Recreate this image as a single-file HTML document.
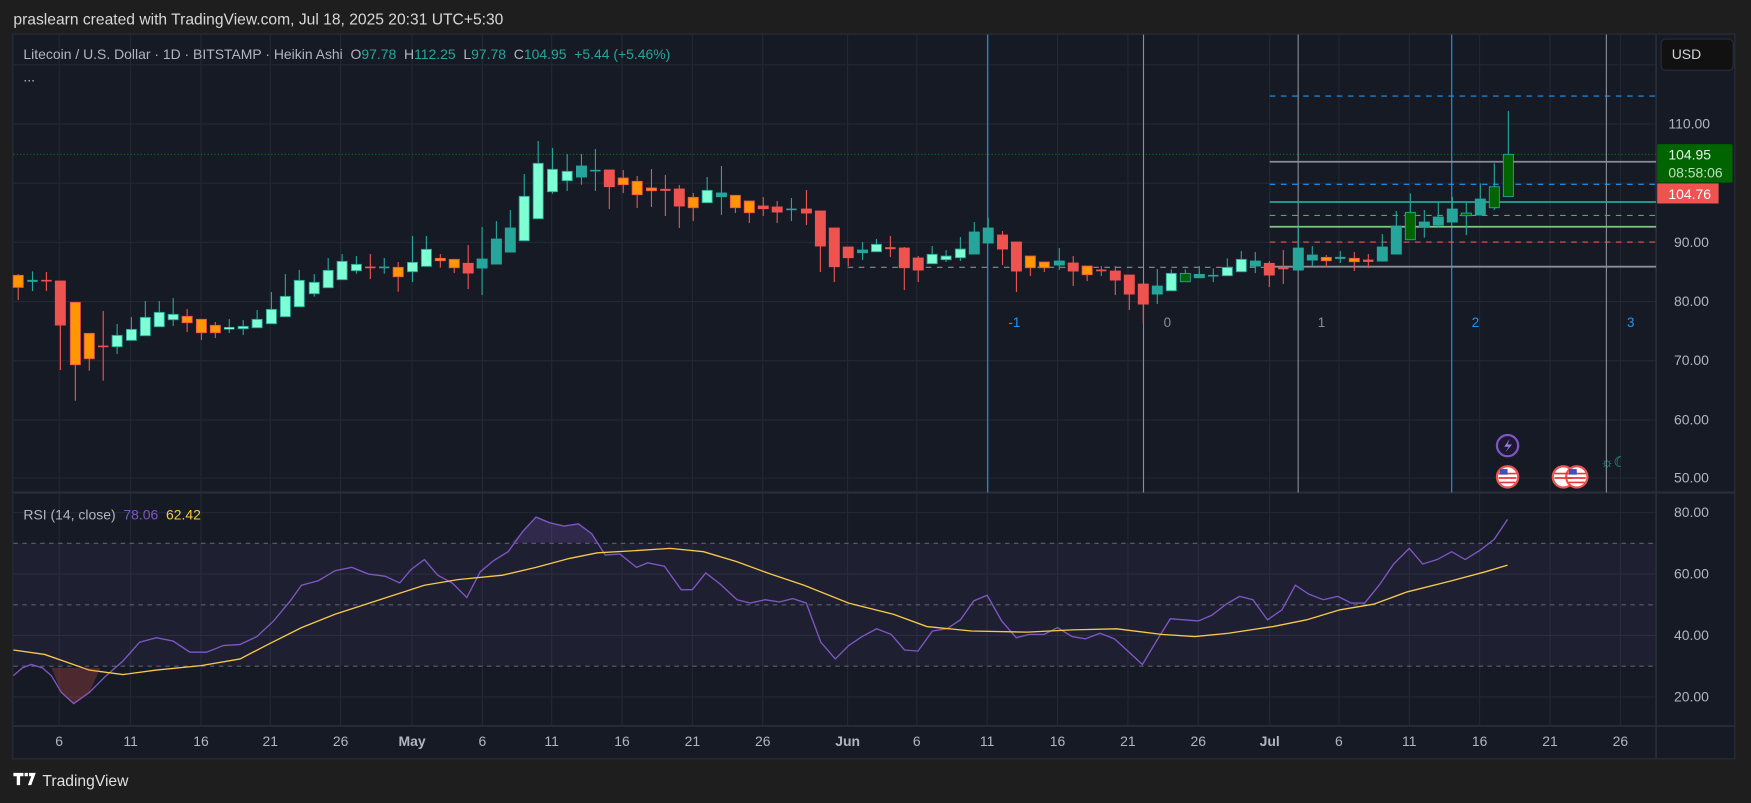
<!DOCTYPE html>
<html><head><meta charset="utf-8">
<style>
html,body{margin:0;padding:0;background:#1e1e1e;width:1751px;height:803px;overflow:hidden}
svg{display:block}
text{font-family:"Liberation Sans",sans-serif;white-space:pre}
</style></head>
<body>
<svg id="s" width="1751" height="803" viewBox="0 0 1568 719" preserveAspectRatio="none" xmlns="http://www.w3.org/2000/svg">
<rect x="0" y="0" width="1568" height="719" fill="#1e1e1e"/>
<text x="12" y="22" font-size="14" fill="#d8d8d8">praslearn created with TradingView.com, Jul 18, 2025 20:31 UTC+5:30</text>
<rect x="11.5" y="30.5" width="1542" height="649" fill="#161a25" stroke="#2a2e39"/>
<g id="grid" stroke="#242833" stroke-width="1"></g>
<rect x="12" y="486.5" width="1471" height="110" fill="#7e57c2" fill-opacity="0.09"/>
<g stroke="#5d606b" stroke-dasharray="4 4" stroke-width="1">
<line x1="12" y1="486.5" x2="1483" y2="486.5"/><line x1="12" y1="541.5" x2="1483" y2="541.5"/><line x1="12" y1="596.5" x2="1483" y2="596.5"/>
</g>
<line x1="12" y1="441" x2="1553" y2="441" stroke="#2a2e39" stroke-width="2"/>
<line x1="12" y1="650" x2="1553" y2="650" stroke="#2a2e39" stroke-width="1.5"/>
<line x1="1483" y1="31" x2="1483" y2="679" stroke="#2a2e39" stroke-width="1.5"/>
<line x1="12" y1="138.2" x2="1483" y2="138.2" stroke="#0a7a0a" stroke-dasharray="1 2"/>
<g stroke-width="1">
<line x1="884.5" y1="31" x2="884.5" y2="441" stroke="#2196f3"/>
<line x1="1024" y1="31" x2="1024" y2="441" stroke="#8a8d96"/>
<line x1="1162.5" y1="31" x2="1162.5" y2="441" stroke="#8a8d96"/>
<line x1="1300" y1="31" x2="1300" y2="441" stroke="#2196f3"/>
<line x1="1438.5" y1="31" x2="1438.5" y2="441" stroke="#8a8d96"/>
</g>
<g font-size="12">
<text x="903" y="293" fill="#2196f3">-1</text>
<text x="1042" y="293" fill="#8a8d96">0</text>
<text x="1180" y="293" fill="#8a8d96">1</text>
<text x="1318" y="293" fill="#2196f3">2</text>
<text x="1457" y="293" fill="#2196f3">3</text>
</g>
<line x1="759" y1="239.4" x2="1137" y2="239.4" stroke="#8a8d96" stroke-dasharray="5 5"/>
<line x1="1137" y1="86" x2="1483" y2="86" stroke="#2196f3" stroke-dasharray="5 5"/>
<line x1="1137" y1="144.8" x2="1483" y2="144.8" stroke="#8a8d96" stroke-width="1.6"/>
<line x1="1137" y1="165" x2="1483" y2="165" stroke="#2196f3" stroke-dasharray="5 5"/>
<line x1="1137" y1="180.9" x2="1483" y2="180.9" stroke="#26a69a" stroke-width="1.6"/>
<line x1="1137" y1="192.9" x2="1483" y2="192.9" stroke="#4caf50" stroke-dasharray="5 5"/>
<line x1="1137" y1="203" x2="1483" y2="203" stroke="#81c784" stroke-width="1.6"/>
<line x1="1137" y1="216.7" x2="1483" y2="216.7" stroke="#ef5350" stroke-dasharray="5 5"/>
<line x1="1137" y1="238.8" x2="1483" y2="238.8" stroke="#8a8d96" stroke-width="1.6"/>
<g id="candles"></g>
<polyline fill="none" stroke="#7e57c2" stroke-width="1.2" points="12,605 20,598 28,595 38,598 46,605 55,620 66,630 80,620 95,605 110,592 125,575 140,571 155,574 170,584 185,584 200,578 215,577 230,570 245,556 260,538 270,524 285,520 300,511 315,508 330,514 345,516 358,522 368,510 380,501 392,515 405,522 418,535 430,512 442,502 455,494 468,476 480,463 492,468 505,471 518,469 530,478 542,497 555,496 570,508 580,504 595,507 610,528 620,528 632,513 645,523 660,537 672,540 685,537 698,539 710,536 722,540 735,575 748,590 760,578 772,570 785,563 798,568 810,582 822,583 835,565 848,563 860,555 872,538 884,533 897,556 910,571 922,568 935,568 947,562 960,570 972,572 985,567 998,572 1010,583 1023,595 1035,575 1048,554 1060,555 1073,556 1085,551 1098,541 1110,534 1122,537 1135,555 1148,546 1160,524 1172,532 1185,537 1198,534 1210,540 1222,540 1235,524 1248,505 1262,491 1274,505 1287,501 1300,494 1312,501 1325,493 1338,483 1350,465"/>
<polyline fill="none" stroke="#f7c948" stroke-width="1.2" points="12,582 40,586 60,593 80,600 110,604 140,600 180,596 215,590 240,577 270,562 300,550 340,537 380,524 410,519 450,515 480,508 510,500 535,495 570,493 600,491 630,494 660,503 690,514 720,524 760,540 800,550 830,561 870,565 920,566 960,564 1000,563 1040,568 1070,570 1100,567 1140,561 1170,555 1200,546 1230,541 1260,530 1300,520 1330,512 1350,506"/>
<path d="M46,598 L55,620 L66,630 L80,620 L90,598 Z" fill="#ef5350" fill-opacity="0.25"/>
<path d="M458,486 L468,476 L480,463 L492,468 L505,471 L518,469 L530,478 L535,486 Z" fill="#7e57c2" fill-opacity="0.25"/>
<g font-size="12.5" fill="#b2b5be">
<text x="21" y="53">Litecoin / U.S. Dollar · 1D · BITSTAMP · Heikin Ashi  O<tspan fill="#26a69a">97.78</tspan>  H<tspan fill="#26a69a">112.25</tspan>  L<tspan fill="#26a69a">97.78</tspan>  C<tspan fill="#26a69a">104.95  +5.44 (+5.46%)</tspan></text>
<text x="21" y="73">...</text>
<text x="21" y="465">RSI (14, close)  <tspan fill="#7e57c2">78.06</tspan>  <tspan fill="#f7c948">62.42</tspan></text>
</g>
<g font-size="12.5" fill="#b2b5be">
<text x="1494" y="115">110.00</text>
<text x="1499" y="221">90.00</text>
<text x="1499" y="274">80.00</text>
<text x="1499" y="327">70.00</text>
<text x="1499" y="380">60.00</text>
<text x="1499" y="432">50.00</text>
<text x="1499" y="463">80.00</text>
<text x="1499" y="518">60.00</text>
<text x="1499" y="573">40.00</text>
<text x="1499" y="628">20.00</text>
</g>
<rect x="1487.5" y="35" width="64.5" height="28" rx="4" fill="#111" stroke="#2a2e39"/>
<text x="1497" y="53" font-size="12.5" fill="#d1d4dc">USD</text>
<rect x="1484" y="129" width="67.5" height="34.5" rx="1.5" fill="#006400"/>
<text x="1494" y="143" font-size="12.5" fill="#e8f5e9">104.95</text>
<text x="1494" y="159" font-size="12.5" fill="#b9e0b9">08:58:06</text>
<rect x="1484" y="164.2" width="55" height="18" fill="#ef5350"/>
<text x="1494" y="178" font-size="12.5" fill="#fff">104.76</text>
<g font-size="12.5" fill="#b2b5be" text-anchor="middle">
<text x="53" y="668">6</text><text x="117" y="668">11</text><text x="180" y="668">16</text><text x="242" y="668">21</text><text x="305" y="668">26</text>
<text x="369" y="668" font-weight="bold">May</text><text x="432" y="668">6</text><text x="494" y="668">11</text><text x="557" y="668">16</text><text x="620" y="668">21</text><text x="683" y="668">26</text>
<text x="759" y="668" font-weight="bold">Jun</text><text x="821" y="668">6</text><text x="884" y="668">11</text><text x="947" y="668">16</text><text x="1010" y="668">21</text><text x="1073" y="668">26</text>
<text x="1137" y="668" font-weight="bold">Jul</text><text x="1199" y="668">6</text><text x="1262" y="668">11</text><text x="1325" y="668">16</text><text x="1388" y="668">21</text><text x="1451" y="668">26</text>
</g>
<circle cx="1350" cy="399" r="9.5" fill="#1d1830" stroke="#7e57c2" stroke-width="2"/>
<path d="M1352,393 L1347,400 L1351,400 L1348,405 L1354,398 L1350,398 Z" fill="#9c7be0"/>
<g>
<circle cx="1350" cy="427" r="9.5" fill="#fff" stroke="#ef5350" stroke-width="2"/>
<circle cx="1400" cy="427" r="9.5" fill="#fff" stroke="#ef5350" stroke-width="2"/>
<circle cx="1412" cy="427" r="9.5" fill="#fff" stroke="#ef5350" stroke-width="2"/>
<g stroke="#e53935" stroke-width="1.5"><line x1="1342" y1="424" x2="1358" y2="424"/><line x1="1342" y1="428" x2="1358" y2="428"/><line x1="1343" y1="432" x2="1357" y2="432"/>
<line x1="1392" y1="424" x2="1408" y2="424"/><line x1="1392" y1="428" x2="1408" y2="428"/><line x1="1404" y1="424" x2="1420" y2="424"/><line x1="1404" y1="428" x2="1420" y2="428"/><line x1="1405" y1="432" x2="1419" y2="432"/></g>
<rect x="1343" y="420" width="7" height="5" fill="#3f51b5"/><rect x="1405" y="420" width="7" height="5" fill="#3f51b5"/>
</g>
<text x="1433" y="418" font-size="13" fill="#26a69a">☼☾</text>
<path d="M12,692 h9 v3 h-3 v8 h-3 v-8 h-3 z M22,692 h3 v3 h-3 z M26,692 h6 l-4 11 h-3 l3 -8 h-2 z" fill="#fff"/>
<text x="38" y="704" font-size="14" fill="#e0e0e0">TradingView</text>
</svg>
<script>
(function(){
var NS="http://www.w3.org/2000/svg";
var g=document.getElementById('grid');
function ln(p,x1,y1,x2,y2){var l=document.createElementNS(NS,'line');l.setAttribute('x1',x1);l.setAttribute('y1',y1);l.setAttribute('x2',x2);l.setAttribute('y2',y2);p.appendChild(l);return l;}
[58,111,164,217,270,323,376,428].forEach(function(y){ln(g,12,y,1483,y);});
[459,514,569,624].forEach(function(y){ln(g,12,y,1483,y);});
[53,117,180,242,305,369,432,494,557,620,683,759,821,884,947,1010,1073,1137,1199,1262,1325,1388,1451].forEach(function(x){ln(g,x,31,x,650);});
var z4=[[51,496,532,492,570,'O'],[91,510,515,484,543,'T'],[130,510,513,486,543,'R'],[169,513,645,513,780,'R'],[211,577,764,577,872,'O'],[250,670,746,670,782,'O'],[289,707,711,603,812,'R'],[328,676,710,642,732,'A'],[368,658,691,621,691,'A'],[407,622,677,573,677,'A'],[446,607,650,573,650,'A'],[485,613,629,564,648,'A'],[524,619,638,597,666,'O'],[564,628,668,628,690,'O'],[603,646,668,636,684,'O'],[642,652,658,627,669,'A'],[681,649,656,630,675,'A'],[720,628,653,600,653,'A'],[760,598,641,546,641,'A'],[799,559,620,492,620,'A'],[838,511,590,480,590,'A'],[880,517,551,492,560,'A'],[919,481,533,444,533,'A'],[958,454,509,432,509,'A'],[998,463,482,438,491,'A'],[1037,470,474,432,507,'R'],[1076,470,474,444,491,'T'],[1115,472,500,456,545,'O'],[1155,457,485,378,516,'A'],[1194,418,469,378,469,'A'],[1233,445,452,432,473,'O'],[1272,448,473,448,489,'O'],[1311,460,489,405,537,'R'],[1350,447,474,351,555,'T'],[1390,387,462,333,462,'T'],[1429,354,426,300,426,'T'],[1468,259,392,192,392,'A'],[1507,160,326,93,326,'A'],[1547,178,245,114,251,'A']];
var z5=[[76,184,212,132,243,'A'],[116,168,201,132,224,'T'],[155,180,184,117,243,'T'],[194,180,230,180,297,'R'],[233,204,224,180,249,'O'],[272,214,254,198,294,'O'],[312,234,242,177,291,'O'],[351,237,242,195,318,'R'],[390,237,288,225,354,'R'],[429,262,293,249,333,'O'],[468,241,278,201,278,'A'],[508,249,260,168,315,'T'],[547,256,293,256,309,'O'],[586,273,308,273,339,'O'],[625,288,296,261,318,'R'],[664,291,306,273,339,'R'],[704,296,300,264,333,'T'],[746,297,309,240,345,'R'],[785,303,408,303,486,'R'],[824,354,470,354,516,'R'],[863,411,443,411,468,'R'],[903,420,428,396,450,'T'],[942,403,425,387,425,'A'],[981,412,417,378,441,'R'],[1020,414,473,411,540,'R'],[1059,444,480,438,516,'R'],[1098,433,461,408,461,'A'],[1137,438,449,420,456,'A'],[1177,417,443,381,453,'A'],[1216,366,432,336,432,'T'],[1255,354,399,324,399,'T'],[1295,375,417,363,465,'R'],[1334,396,483,396,546,'R'],[1373,438,473,438,498,'O'],[1412,456,473,456,486,'O'],[1454,453,465,414,480,'T'],[1493,459,483,438,528,'R'],[1532,468,494,468,513,'O']];
var z6=[[64,329,332,318,348,'R'],[106,333,360,318,405,'R'],[148,345,402,345,450,'R'],[190,372,432,372,492,'R'],[232,378,402,327,432,'T'],[274,340,392,328,392,'A'],[316,340,365,328,365,'G'],[358,343,353,318,353,'T'],[400,345,348,325,366,'T'],[442,322,347,295,347,'A'],[484,298,335,273,335,'A'],[526,303,318,276,339,'T'],[568,310,345,303,381,'R'],[610,323,327,270,372,'R'],[655,264,330,200,330,'T'],[697,285,300,258,318,'T'],[739,292,302,285,322,'O'],[781,291,296,273,309,'T'],[823,295,305,276,333,'O'],[865,299,305,282,324,'R'],[907,261,303,222,303,'T'],[949,198,282,153,282,'T'],[991,157,239,100,239,'G'],[1033,186,200,150,233,'T'],[1075,171,195,125,201,'T'],[1117,147,186,110,186,'T'],[1159,159,167,129,225,'G'],[1201,117,165,70,165,'T'],[1243,80,143,10,150,'G']];
var C={A:['#7fffd4','#26a69a','#26a69a'],T:['#26a69a','#26a69a','#26a69a'],R:['#ef5350','#ef5350','#ef5350'],O:['#ff9800','#ef5350','#ef5350'],G:['#006400','#26a69a','#26a69a']};
var cg=document.getElementById('candles');
function draw(x,bt,bb,wt,wb,t){var c=C[t];
var w=ln(cg,x,Math.min(wt,bt),x,Math.max(wb,bb));w.setAttribute('stroke',c[2]);w.setAttribute('stroke-width','1');
var r=document.createElementNS(NS,'rect');var h=Math.max(bb-bt,1.2);
r.setAttribute('x',x-4.5);r.setAttribute('y',bt);r.setAttribute('width',9);r.setAttribute('height',h);
r.setAttribute('fill',c[0]);r.setAttribute('stroke',c[1]);r.setAttribute('stroke-width',h>2?'0.8':'0.3');cg.appendChild(r);}
z4.forEach(function(a){draw(a[0]/3.127,98.5+a[1]/3.35,98.5+a[2]/3.35,98.5+a[3]/3.35,98.5+a[4]/3.35,a[5]);});
z5.forEach(function(a){draw(483.6+a[0]/3.127,98.5+a[1]/3.35,98.5+a[2]/3.35,98.5+a[3]/3.35,98.5+a[4]/3.35,a[5]);});
z6.forEach(function(a){draw(967.1+a[0]/3.35,143.3+a[1]/3.35,143.3+a[2]/3.35,143.3+a[3]/3.35,143.3+a[4]/3.35,a[5]);});
draw(1350.7,138.2,175.9,99.4,175.9,'G');
})();
</script>
</body></html>
